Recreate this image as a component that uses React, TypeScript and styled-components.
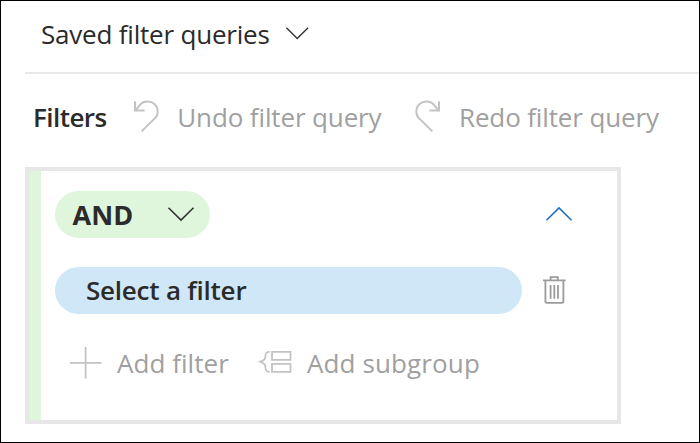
import React from 'react';
import styled, { createGlobalStyle } from 'styled-components';

const GlobalStyle = createGlobalStyle`
  *, *::before, *::after { box-sizing: border-box; }
  body { margin: 0; background: #fff; }
`;

const Frame = styled.main`
  width: 700px;
  height: 443px;
  border: 1px solid #000;
  padding-left: 24px;
  overflow: hidden;
  background: #fff;
  font-family: "Open Sans", "Noto Sans", sans-serif;
  font-size: 26px;
  line-height: 34px;
  color: #2b2b2b;
`;

const SavedQueries = styled.header`
  display: flex;
  height: 73px;
  padding: 16px 0 0 16px;
  border-bottom: 2px solid #e8e8e8;
`;

const Toolbar = styled.div`
  display: flex;
  height: 93px;
  padding: 26px 0 0 8px;
`;

const Label = styled.span<{ $weight?: number; $spacing?: number; $width?: number; $size?: number }>`
  flex: none;
  white-space: nowrap;
  font-weight: ${p => p.$weight ?? 400};
  font-size: ${p => p.$size ?? 26}px;
  letter-spacing: ${p => p.$spacing ?? 0}px;
  width: ${p => (p.$width ? `${p.$width}px` : 'auto')};
`;

const Action = styled.button<{ $width?: number; $gap: number }>`
  display: flex;
  flex: none;
  align-items: flex-start;
  gap: ${p => p.$gap}px;
  width: ${p => (p.$width ? `${p.$width}px` : 'auto')};
  padding: 0;
  border: 0;
  background: none;
  font: inherit;
  color: #a0a0a0;
  text-align: left;
`;

const Icon = styled.svg<{ $top?: number; $color?: string }>`
  display: block;
  flex: none;
  margin-top: ${p => p.$top ?? 0}px;
  color: ${p => p.$color ?? '#c3c3c3'};
  fill: none;
  stroke: currentColor;
  overflow: visible;
`;

const Group = styled.section`
  display: flex;
  width: 596px;
  height: 257px;
  border: 4px solid #e7e7e7;
`;

const GroupStripe = styled.div`
  width: 12px;
  background: #dff6dd;
`;

const GroupBody = styled.div`
  flex: 1;
  padding: 20px 0 0 13.5px;
`;

const GroupRow = styled.div`
  display: flex;
  height: 76px;
`;

const Pill = styled.div<{ $width: number; $top: number; $indent: number; $gap: number; $color: string }>`
  display: flex;
  flex: none;
  width: ${p => p.$width}px;
  height: 46.5px;
  padding: ${p => p.$top}px 0 0 ${p => p.$indent}px;
  border-radius: 24px;
  background: ${p => p.$color};
  margin-right: ${p => p.$gap}px;
`;

const Actions = styled.div`
  display: flex;
  padding: 3px 0 0 15.5px;
`;

function Chevron({ width, top, color = '#333', up = false }: { width: number; top: number; color?: string; up?: boolean }) {
  return (
    <Icon width={width} height={width / 2 + 1} viewBox="0 0 26 14" $top={top} $color={color} strokeWidth={1.6}>
      <path d={up ? 'M.5 13.3 13 .9l12.5 12.4' : 'M.5.7 13 13.1 25.5.7'} />
    </Icon>
  );
}

const TURN_ARROW = 'M1 .3V9.4H10.6M1.3 9.1 5.2 5A10.05 10.05 0 1 1 19.8 18.4L7.6 30.4';

function UndoIcon() {
  return (
    <Icon width={24} height={31} $top={1} strokeWidth={2}>
      <path d={TURN_ARROW} />
    </Icon>
  );
}

function RedoIcon() {
  return (
    <Icon width={24} height={31} $top={1} strokeWidth={2}>
      <path d={TURN_ARROW} transform="matrix(-1 0 0 1 24 0)" />
    </Icon>
  );
}

function TrashIcon() {
  return (
    <Icon width={23} height={28} $top={9} $color="#9b9b9b" strokeWidth={1.8}>
      <path d="M0 4.4H22.6M7.6 4V1.2H14.8V4M2.4 4.4V25.3q0 1.6 1.6 1.6H18.8q1.6 0 1.6-1.6V4.4M7.6 9V22.8M11.3 9V22.8M15 9V22.8" />
    </Icon>
  );
}

function PlusIcon() {
  return (
    <Icon width={32} height={32} $top={0.5} strokeWidth={1.8}>
      <path d="M0 15.8H31.5M15.6 0V31.5" />
    </Icon>
  );
}

function SubgroupIcon() {
  return (
    <Icon width={32} height={22} $top={4.5} strokeWidth={1.8}>
      <path d="M9.7.8C6.1.8 5.5 2.2 5.5 4.6 5.5 8 4.5 9 .3 10.7 4.5 12.4 5.5 13.6 5.5 17c0 2.4.6 3.8 4.2 3.8M12 .9H30.5V8.9H12ZM12 12.8H30.5V20.8H12Z" />
    </Icon>
  );
}

export default function App() {
  return (
    <>
      <GlobalStyle />
      <Frame>
        <SavedQueries>
          <Label $spacing={-0.2} $width={245}>Saved filter queries</Label>
          <Chevron width={22.5} top={10} />
        </SavedQueries>
        <Toolbar>
          <Label $weight={600} $spacing={-0.55} $width={101}>Filters</Label>
          <Action $width={282} $gap={19.3}>
            <UndoIcon />
            <Label $spacing={-0.13}>Undo filter query</Label>
          </Action>
          <Action $gap={19}>
            <RedoIcon />
            <Label $spacing={-0.14}>Redo filter query</Label>
          </Action>
        </Toolbar>
        <Group>
          <GroupStripe />
          <GroupBody>
            <GroupRow>
              <Pill $width={155.5} $top={7} $indent={18} $gap={335.5} $color="#dff6dd">
                <Label $weight={700} $size={27} $spacing={0.1} $width={95.5}>AND</Label>
                <Chevron width={26} top={9} />
              </Pill>
              <Chevron width={26} top={16} color="#1f70c1" up />
            </GroupRow>
            <GroupRow>
              <Pill $width={467.5} $top={6} $indent={31.5} $gap={21} $color="#d0e7f8">
                <Label $weight={600} $spacing={-0.22}>Select a filter</Label>
              </Pill>
              <TrashIcon />
            </GroupRow>
            <Actions>
              <Action $width={190} $gap={15}>
                <PlusIcon />
                <Label $spacing={0.05}>Add filter</Label>
              </Action>
              <Action $gap={15}>
                <SubgroupIcon />
                <Label $spacing={0.12}>Add subgroup</Label>
              </Action>
            </Actions>
          </GroupBody>
        </Group>
      </Frame>
    </>
  );
}
